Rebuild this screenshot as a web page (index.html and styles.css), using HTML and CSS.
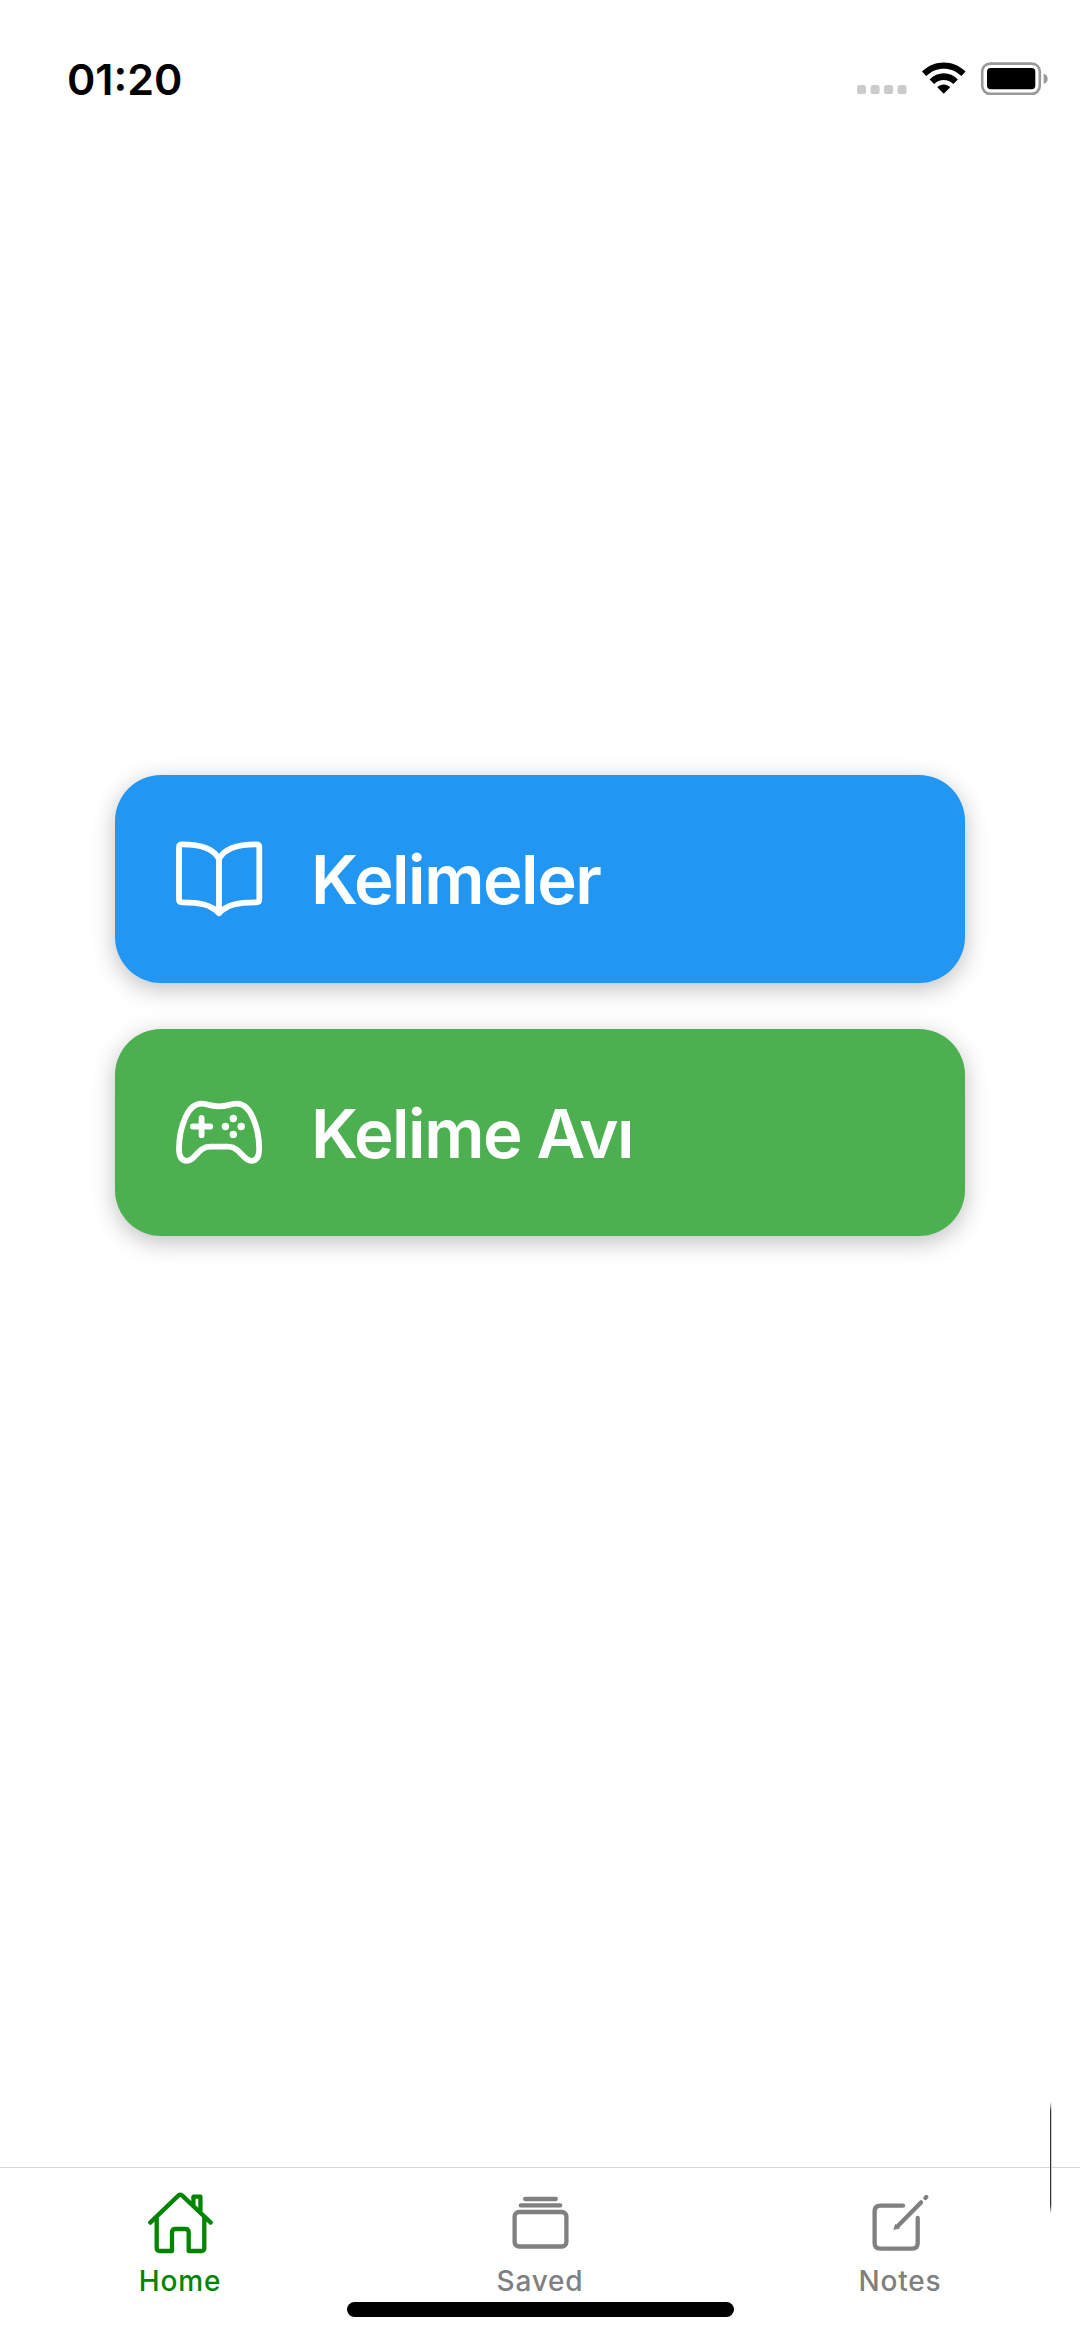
FILE: index.html
```html
<!DOCTYPE html>
<html lang="tr">
<head>
<meta charset="utf-8">
<title>Kelimeler</title>
<link rel="stylesheet" href="styles.css">
</head>
<body>
<div class="screen">
  <header class="status">
    <span class="time">01:20</span>
    <svg class="status-icons" viewBox="0 0 200 40">
      <g fill="#cbcbcb"><rect x="2" y="25" width="9" height="9" rx="2.6"/><rect x="15.6" y="25" width="9" height="9" rx="2.6"/><rect x="29" y="25" width="9" height="9" rx="2.6"/><rect x="42.6" y="25" width="9" height="9" rx="2.6"/></g>
      <path d="M67 11.6C79-.7 98.500-.7 110.600 11.600L106.400 16.100C96.500 6.300 81 6.300 71.200 16.100Z"/>
      <path d="M74.600 19.500C82.500 11.300 95 11.300 102.900 19.500L98.300 24.100C93 18.700 84.500 18.700 79.200 24.100Z"/>
      <path d="M82.300 27.200C86 23.600 91.500 23.600 95.200 27.200L88.750 33.800Z"/>
      <rect x="127.200" y="3.600" width="57.600" height="30.200" rx="8" fill="none" stroke="#999" stroke-width="2.600"/>
      <rect x="132" y="8" width="48.300" height="21.300" rx="3.700"/>
      <path d="M188.700 13.500Q192.600 15 192.600 18.700T188.700 24Z" fill="#999"/>
    </svg>
  </header>

  <main class="menu">
    <button class="card card-blue">
      <svg class="card-icon" viewBox="0 0 92 92">
        <path d="M46 26C41 16 27.500 11.300 9 11.300Q6 11.300 6 14.300V66.300Q6 69.300 9 69.300C26.500 69.300 38 71.500 46 80.300C54 71.500 65.500 69.300 83.300 69.300Q86.300 69.300 86.300 66.300V14.300Q86.300 11.300 83.300 11.300C64.500 11.300 51 16 46 26V80"/>
      </svg>
      <span class="card-label">Kelimeler</span>
    </button>
    <button class="card card-green">
      <svg class="card-icon" viewBox="0 0 92 92">
        <path d="M46 20.400C38 20.400 34 17.700 28.500 17.700C21 17.700 16.500 22.300 12.500 31.300C8.500 40.300 6 52.300 6 62.800C6 70.800 8.500 74.800 14 74.800C22.500 74.800 24.500 60.700 37 60.700H55C67.500 60.700 69.800 74.800 78.300 74.800C83.800 74.800 86.200 70.800 86.200 62.800C86.200 52.300 83.700 40.300 79.700 31.300C75.700 22.300 71.200 17.700 63.700 17.700C58.200 17.700 54 20.400 46 20.400Z"/>
        <path d="M28.600 31.800V49.200M19.900 40.500H37.300"/>
        <g class="dots"><circle cx="52.400" cy="40.500" r="3.700"/><circle cx="60.300" cy="32.500" r="3.700"/><circle cx="68.200" cy="40.500" r="3.700"/><circle cx="60.300" cy="48.400" r="3.700"/></g>
      </svg>
      <span class="card-label">Kelime Avı</span>
    </button>
  </main>

  <nav class="tabs">
    <a class="tab active">
      <svg class="tab-icon" viewBox="0 0 70 70"><path d="M5.200 35.600L33.600 8.400Q35.300 6.900 37 8.400L65.800 35.600M11.700 30.500V61Q11.700 64 14.700 64H27V45.500Q27 42 30.500 42H40.300Q43.700 42 43.700 45.500V64H56.300Q59.300 64 59.300 61V30.500M48.400 18.500V9.700H55.400V25.500"/></svg>
      <span class="tab-label">Home</span>
    </a>
    <a class="tab">
      <svg class="tab-icon" viewBox="0 0 70 70"><rect x="9.600" y="25" width="51.800" height="34.500" rx="4.500"/><path d="M15.800 18.400H55.200M20.200 12H50.800"/></svg>
      <span class="tab-label">Saved</span>
    </a>
    <a class="tab">
      <svg class="tab-icon" viewBox="0 0 70 70"><path d="M38 18.700H15.300Q9.600 18.700 9.600 24.400V56Q9.600 61.700 15.300 61.700H47Q52.700 61.700 52.700 56V31"/><path d="M32.600 39.200L56 15.400M60.400 11L61.300 10.100"/><path class="tip" d="M29 42L30.600 37.500L34 41Z"/></svg>
      <span class="tab-label">Notes</span>
    </a>
  </nav>
  <div class="scroll-mark"></div>
  <div class="home-indicator"></div>
</div>
</body>
</html>
```
FILE: styles.css
```css
* { box-sizing: border-box; }
body { margin: 0; background: #fff; font-family: Inter, "Liberation Sans", sans-serif; }
.screen { position: relative; width: 1080px; height: 2340px; display: flex; flex-direction: column; overflow: hidden; }
.status { height: 140px; padding: 56px 20px 0 67px; display: flex; justify-content: space-between; align-items: flex-start; }
.time { font-size: 43px; line-height: 46px; font-weight: 600; letter-spacing: 0; }
.status-icons { width: 200px; height: 40px; margin: 4px 5px 0 0; }
.menu { flex: 1; padding: 635px 115px 0 115px; display: flex; flex-direction: column; gap: 46px; }
.card { width: 100%; height: 207.5px; padding: 0 58px; border: 0; border-radius: 46px; display: flex; align-items: center; gap: 46px; color: #fff; font-family: inherit; text-align: left; box-shadow: 0 6px 23px rgba(0, 0, 0, .25); }
.card-blue { background: #2196f3; }
.card-green { background: #4caf50; }
.card-icon { width: 92px; height: 92px; flex: none; fill: none; stroke: #fff; stroke-width: 5.800; stroke-linecap: round; stroke-linejoin: round; }
.dots { fill: #fff; stroke: none; }
.card-label { padding-top: 3px; font-size: 67px; line-height: 80px; font-weight: 600; letter-spacing: -1.5px; white-space: nowrap; }
.tabs { height: 173px; border-top: 1px solid #d8d8d8; display: flex; }
.tab { flex: 1; padding-top: 19px; display: flex; flex-direction: column; align-items: center; color: #808080; }
.active { color: #008500; }
.tab-icon { width: 70px; height: 70px; fill: none; stroke: currentColor; stroke-width: 4.300; stroke-linecap: round; stroke-linejoin: round; }
.tip { fill: currentColor; stroke-width: 1; }
.tab-label { margin-top: 6px; font-size: 28px; line-height: 36px; font-weight: 500; letter-spacing: .8px; }
.scroll-mark { position: absolute; left: 1050px; top: 2102px; width: 2px; height: 112px; background: linear-gradient(90deg, #333 50%, #ccc 50%); -webkit-mask-image: linear-gradient(transparent, #000 9px, #000 103px, transparent); mask-image: linear-gradient(transparent, #000 9px, #000 103px, transparent); }
.home-indicator { position: absolute; left: 347px; top: 2302px; width: 387px; height: 15px; border-radius: 8px; background: #000; }
```
